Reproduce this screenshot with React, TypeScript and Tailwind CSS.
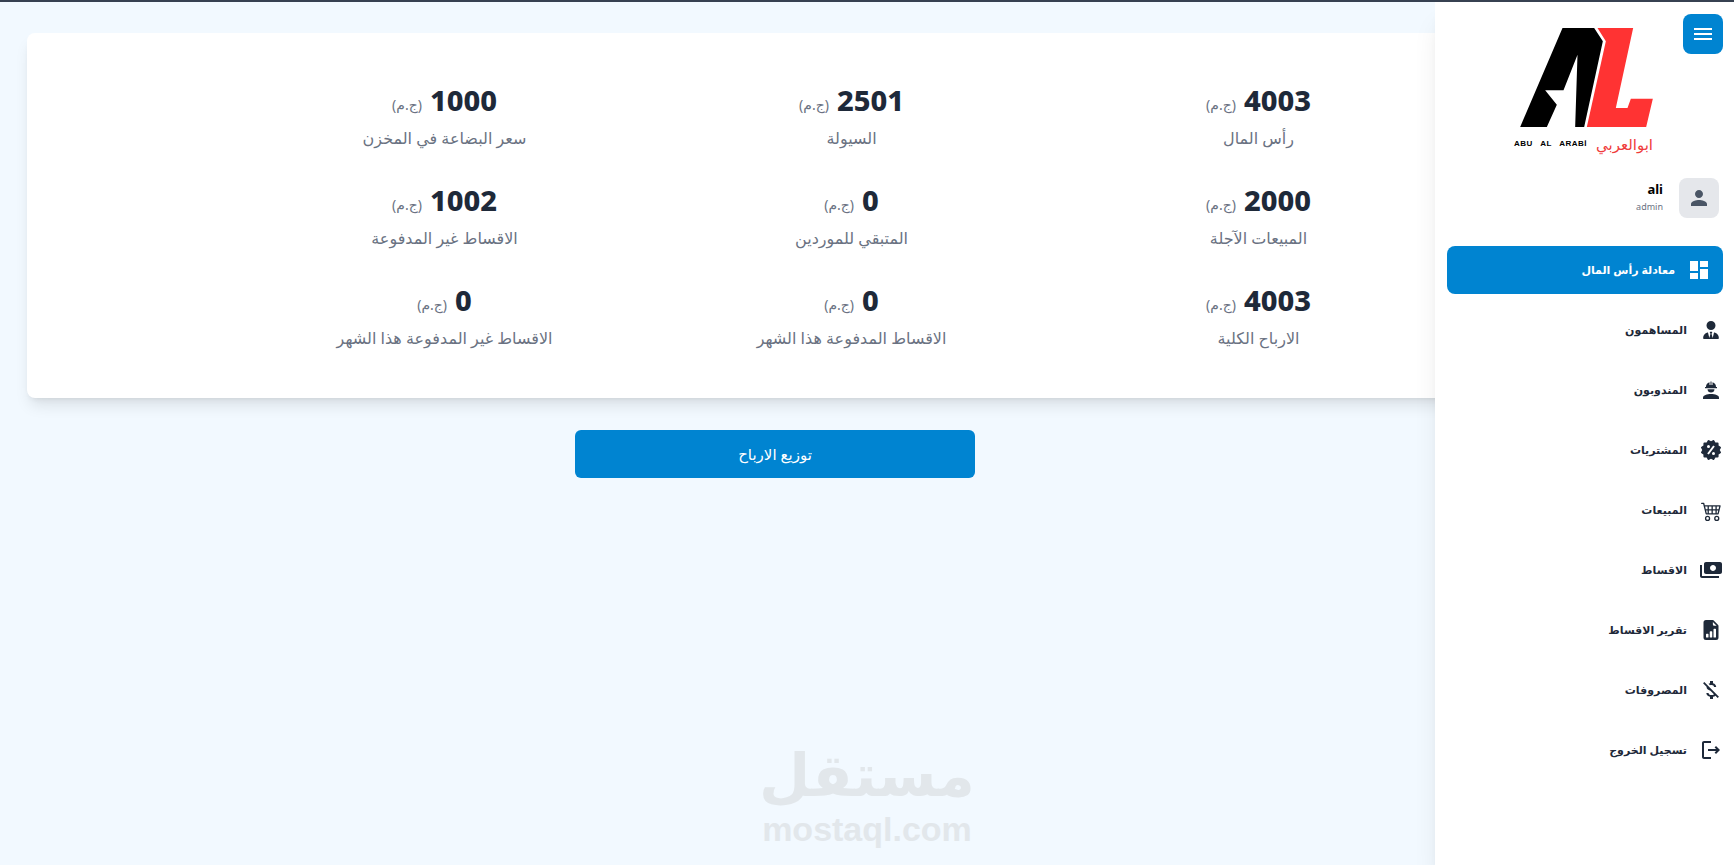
import type { ReactNode } from "react";
import { MdDashboard, MdPerson, MdMenu, MdPayments, MdOutlineLogout, MdMoneyOff } from "react-icons/md";
import { FaUserTie } from "react-icons/fa6";
import { BsCart4, BsFileEarmarkBarGraphFill } from "react-icons/bs";
import { BiSolidOffer } from "react-icons/bi";

const stats = [
  ["4003", "رأس المال"], ["2501", "السيولة"], ["1000", "سعر البضاعة في المخزن"],
  ["2000", "المبيعات الآجلة"], ["0", "المتبقي للموردين"], ["1002", "الاقساط غير المدفوعة"],
  ["4003", "الارباح الكلية"], ["0", "الاقساط المدفوعة هذا الشهر"], ["0", "الاقساط غير المدفوعة هذا الشهر"],
];

function WorkerIcon() {
  return (
    <svg width="24" height="24" viewBox="0 0 24 24" fill="currentColor">
      <path d="M7 9a5 5 0 0 1 3.500-4.800V7h1V3.500h1V7h1V4.200A5 5 0 0 1 17 9h1v1.200H6V9z" />
      <path d="M8.500 11.200h7c0 2-1.500 3.300-3.500 3.300s-3.500-1.300-3.500-3.300z" />
      <path d="M4 21v-1.500c0-2.300 4-3.600 8-3.600s8 1.300 8 3.600V21z" />
    </svg>
  );
}

const nav: [string, ReactNode][] = [
  ["المساهمون", <FaUserTie size={18} />],
  ["المندوبون", <WorkerIcon />],
  ["المشتريات", <BiSolidOffer size={26} />],
  ["المبيعات", <BsCart4 size={21} />],
  ["الاقساط", <MdPayments size={24} className="-scale-x-100" />],
  ["تقرير الاقساط", <BsFileEarmarkBarGraphFill size={20} />],
  ["المصروفات", <MdMoneyOff size={24} />],
  ["تسجيل الخروج", <MdOutlineLogout size={24} />],
];

function Logo() {
  return (
    <svg width="133" height="99" viewBox="258 85 398 297" className="block">
      <path fill="#000" d="M258 382 385 85h95l26 40-56 257h-27l7-217-42 107h-55l35 43-30 67z" />
      <path fill="#ff3333" d="M490 85h107l-52 240h35l10-28h66l-20 85H458l57-257z" />
    </svg>
  );
}

export default function App() {
  return (
    <div dir="rtl" className="relative h-[865px] overflow-hidden border-t-2 border-[#374151] bg-[#f2f9ff] font-['Noto_Sans','DejaVu_Sans',sans-serif]">
      <div dir="ltr" className="pt-[31px]">
        <div dir="rtl" className="ml-[27px] h-[365px] w-[1680px] rounded-lg bg-white pl-[214px] pr-[245px] pt-[48px] shadow-lg">
          <div className="grid grid-cols-3">
            {stats.map(([v, l], i) => (
              <div key={i} className="flex h-[100px] flex-col items-center">
                <div className="flex items-start gap-2" dir="ltr">
                  <span className="mt-[12px] text-[14px] leading-[24px] text-gray-500">(ج.م)</span>
                  <span className="text-[29px] font-extrabold leading-[38px] text-gray-800">{v}</span>
                </div>
                <p className="mt-[7px] text-[16px] leading-6 text-gray-500">{l}</p>
              </div>
            ))}
          </div>
        </div>
        <button className="ml-[575px] mt-[32px] h-[48px] w-[400px] rounded-md bg-sky-600 text-[15px] text-white">توزيع الارباح</button>
      </div>

      {/* watermark */}
      <div className="absolute bottom-[16px] left-1/2 flex -translate-x-1/2 flex-col items-center text-[#e2e7eb]">
        <span className="font-['DejaVu_Sans',sans-serif] text-[59px] font-bold leading-[69px]">مستقل</span>
        <span className="font-['Liberation_Sans',sans-serif] text-[34px] font-bold leading-[39px]" dir="ltr">mostaql.com</span>
      </div>

      <aside className="absolute right-0 top-0 flex h-full w-[299px] flex-col bg-white shadow-xl">
        <button className="absolute right-[11px] top-[12px] flex h-10 w-10 items-center justify-center rounded-lg bg-sky-600 text-white">
          <MdMenu size={24} />
        </button>
        <div className="mx-auto pl-[4px] pt-[26px]">
          <Logo />
          <div dir="ltr" className="-ml-[6px] mt-[7px] flex h-[20px] w-[139px] items-center justify-between">
            <span className="font-['Liberation_Sans',sans-serif] text-[8px] font-bold tracking-[0.5px] text-black [word-spacing:5px]">ABU AL ARABİ</span>
            <span className="text-[15px] leading-5 text-[#ef3b3b]">ابوالعربي</span>
          </div>
        </div>

        <div className="mr-[15px] mt-[24px] flex items-center gap-4">
          <div className="flex h-10 w-10 items-center justify-center rounded-lg bg-gray-200 text-gray-600">
            <MdPerson size={24} />
          </div>
          <div className="flex flex-col items-end" dir="ltr">
            <span className="text-[13px] font-bold leading-[18px] text-black">ali</span>
            <span className="text-[9px] leading-[18px] text-gray-500">admin</span>
          </div>
        </div>

        <nav className="ml-3 mr-[11px] mt-[28px] flex flex-col">
          <a className="mb-[6px] flex h-12 items-center gap-3 rounded-lg bg-sky-600 px-3 text-[11px] font-bold text-white">
            <MdDashboard size={24} />
            معادلة رأس المال
          </a>
          {nav.map(([t, icon]) => (
            <a key={t} className="flex h-[60px] items-center gap-3 text-[11px] font-bold text-gray-800">
              <span className="flex h-6 w-6 items-center justify-center">{icon}</span>
              {t}
            </a>
          ))}
        </nav>
      </aside>
    </div>
  );
}
